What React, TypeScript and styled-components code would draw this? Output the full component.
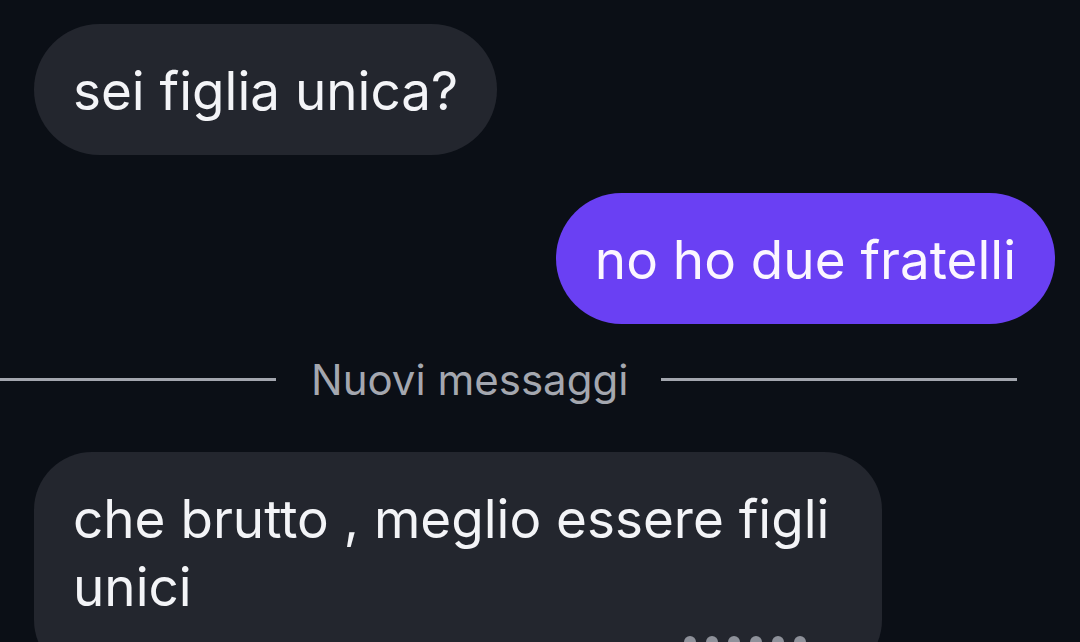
import React from "react";
import styled, { createGlobalStyle } from "styled-components";

const Global = createGlobalStyle`
  html, body { margin: 0; padding: 0; background: #0b0f16; }
  body { width: 1080px; height: 642px; overflow: hidden; font-family: Inter, "Noto Sans", sans-serif; }
`;

const Screen = styled.div`
  width: 1080px;
  height: 642px;
  overflow: hidden;
  background: #0b0f16;
  display: flex;
  flex-direction: column;
  padding-top: 24px;
  box-sizing: border-box;
`;

const Row = styled.div<{ $mine?: boolean; $mt?: number }>`
  display: flex;
  justify-content: ${(p) => (p.$mine ? "flex-end" : "flex-start")};
  padding: 0 25px 0 34px;
  margin-top: ${(p) => p.$mt ?? 0}px;
  flex-shrink: 0;
`;

const Bubble = styled.div<{ $mine?: boolean; $max?: number }>`
  box-sizing: border-box;
  max-width: ${(p) => p.$max ?? 900}px;
  padding: 33px 39px 30px;
  border-radius: 66px;
  background: ${(p) => (p.$mine ? "#6a40f3" : "#23262e")};
  color: ${(p) => (p.$mine ? "#fbf6ff" : "#f3f4f7")};
  font-size: 53px;
  line-height: 68px;
  letter-spacing: 0;
`;

const TallBubble = styled(Bubble)`
  border-radius: 58px;
`;

const Divider = styled.div`
  display: flex;
  align-items: center;
  margin-top: 29px;
  padding-right: 63px;
  height: 52px;
  flex-shrink: 0;
`;

const Line = styled.div<{ $w?: number }>`
  height: 3px;
  background: #a3a6ae;
  flex: ${(p) => (p.$w ? `0 0 ${p.$w}px` : "1")};
`;

const DividerLabel = styled.span`
  color: #a4a7af;
  font-size: 42px;
  margin: 0 33px 0 35px;
  letter-spacing: 0;
  white-space: nowrap;
`;

const Dots = styled.div`
  display: flex;
  gap: 10px;
  justify-content: flex-end;
  margin-top: 15px;
  padding-right: 37px;
`;

const Dot = styled.span`
  width: 12px;
  height: 12px;
  border-radius: 50%;
  background: #8e919a;
`;

export default function App() {
  return (
    <>
      <Global />
      <Screen>
        <Row>
          <Bubble>sei figlia unica?</Bubble>
        </Row>
        <Row $mine $mt={38}>
          <Bubble $mine>no ho due fratelli</Bubble>
        </Row>
        <Divider>
          <Line $w={276} />
          <DividerLabel>Nuovi messaggi</DividerLabel>
          <Line />
        </Divider>
        <Row $mt={47}>
          <TallBubble $max={848}>
            che brutto , meglio essere figli unici
            <Dots>
              {Array.from({ length: 6 }).map((_, i) => (
                <Dot key={i} />
              ))}
            </Dots>
          </TallBubble>
        </Row>
      </Screen>
    </>
  );
}
